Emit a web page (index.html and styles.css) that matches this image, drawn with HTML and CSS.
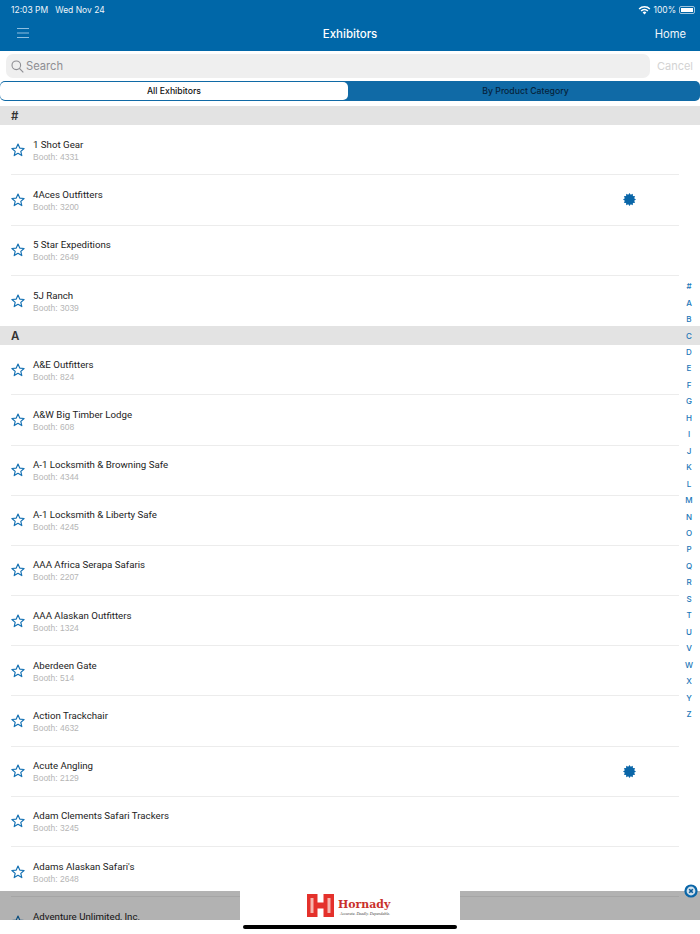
FILE: index.html
```html
<!DOCTYPE html>
<html lang="en">
<head>
<meta charset="utf-8">
<title>Exhibitors</title>
<link rel="stylesheet" href="styles.css">
</head>
<body>
<svg class="defs" width="0" height="0">
  <defs>
    <symbol id="star" viewBox="0 0 14 14"><path d="M7 1.1 8.75 5.1 13.1 5.5 9.8 8.35 10.8 12.6 7 10.35 3.2 12.6 4.2 8.35 .9 5.5 5.25 5.1Z" fill="none" stroke="#1270b3" stroke-width="1.15" stroke-linejoin="round"/></symbol>
    <symbol id="seal" viewBox="0 0 14 14"><path d="M7 0 8.35 1.98 10.5.94 10.68 3.32 13.06 3.5 12.02 5.65 14 7 12.02 8.35 13.06 10.5 10.68 10.68 10.5 13.06 8.35 12.02 7 14 5.65 12.02 3.5 13.06 3.32 10.68.94 10.5 1.98 8.35 0 7 1.98 5.65.94 3.5 3.32 3.32 3.5.94 5.65 1.98Z" fill="#0a66a8"/></symbol>
  </defs>
</svg>
<div class="app">
  <header class="topbar">
    <div class="status">
      <div class="status-left"><span>12:03 PM</span><span>Wed Nov 24</span></div>
      <div class="status-right">
        <svg class="wifi" width="13" height="10" viewBox="0 0 13 10"><path d="M.6 3.4A8.4 8.4 0 0 1 12.4 3.4L11.3 4.5A6.8 6.8 0 0 0 1.7 4.5Z M2.6 5.4A5.6 5.6 0 0 1 10.4 5.4L9.3 6.5A4 4 0 0 0 3.7 6.5Z M4.6 7.4A2.8 2.8 0 0 1 8.4 7.4L6.5 9.4Z" fill="#fff"/></svg>
        <span>100%</span>
        <span class="battery"><span class="battery-fill"></span></span>
      </div>
    </div>
    <nav class="navbar">
      <svg class="menu" width="12" height="12" viewBox="0 0 12 12"><path d="M0 1.5H12M0 6H12M0 10.5H12" stroke="#8fbfe0" stroke-width="1"/></svg>
      <h1 class="title">Exhibitors</h1>
      <span class="home">Home</span>
    </nav>
  </header>
  <div class="searchrow">
    <div class="searchbox">
      <svg width="13" height="13" viewBox="0 0 13 13"><circle cx="5.3" cy="5.3" r="4.3" fill="none" stroke="#8e8e93" stroke-width="1.1"/><path d="M8.4 8.4 12.3 12.3" stroke="#8e8e93" stroke-width="1.2"/></svg>
      <span>Search</span>
    </div>
    <span class="cancel">Cancel</span>
  </div>
  <div class="segments">
    <div class="segment active">All Exhibitors</div>
    <div class="segment">By Product Category</div>
  </div>
  <main class="list">
    <div class="section">#</div>
    <div class="row"><svg class="star"><use href="#star"/></svg><div class="info"><div class="name">1 Shot Gear</div><div class="booth">Booth: 4331</div></div></div>
    <div class="row"><svg class="star"><use href="#star"/></svg><div class="info"><div class="name">4Aces Outfitters</div><div class="booth">Booth: 3200</div></div><svg class="seal"><use href="#seal"/></svg></div>
    <div class="row"><svg class="star"><use href="#star"/></svg><div class="info"><div class="name">5 Star Expeditions</div><div class="booth">Booth: 2649</div></div></div>
    <div class="row last"><svg class="star"><use href="#star"/></svg><div class="info"><div class="name">5J Ranch</div><div class="booth">Booth: 3039</div></div></div>
    <div class="section">A</div>
    <div class="row"><svg class="star"><use href="#star"/></svg><div class="info"><div class="name">A&amp;E Outfitters</div><div class="booth">Booth: 824</div></div></div>
    <div class="row"><svg class="star"><use href="#star"/></svg><div class="info"><div class="name">A&amp;W Big Timber Lodge</div><div class="booth">Booth: 608</div></div></div>
    <div class="row"><svg class="star"><use href="#star"/></svg><div class="info"><div class="name">A-1 Locksmith &amp; Browning Safe</div><div class="booth">Booth: 4344</div></div></div>
    <div class="row"><svg class="star"><use href="#star"/></svg><div class="info"><div class="name">A-1 Locksmith &amp; Liberty Safe</div><div class="booth">Booth: 4245</div></div></div>
    <div class="row"><svg class="star"><use href="#star"/></svg><div class="info"><div class="name">AAA Africa Serapa Safaris</div><div class="booth">Booth: 2207</div></div></div>
    <div class="row"><svg class="star"><use href="#star"/></svg><div class="info"><div class="name">AAA Alaskan Outfitters</div><div class="booth">Booth: 1324</div></div></div>
    <div class="row"><svg class="star"><use href="#star"/></svg><div class="info"><div class="name">Aberdeen Gate</div><div class="booth">Booth: 514</div></div></div>
    <div class="row"><svg class="star"><use href="#star"/></svg><div class="info"><div class="name">Action Trackchair</div><div class="booth">Booth: 4632</div></div></div>
    <div class="row"><svg class="star"><use href="#star"/></svg><div class="info"><div class="name">Acute Angling</div><div class="booth">Booth: 2129</div></div><svg class="seal"><use href="#seal"/></svg></div>
    <div class="row"><svg class="star"><use href="#star"/></svg><div class="info"><div class="name">Adam Clements Safari Trackers</div><div class="booth">Booth: 3245</div></div></div>
    <div class="row"><svg class="star"><use href="#star"/></svg><div class="info"><div class="name">Adams Alaskan Safari's</div><div class="booth">Booth: 2648</div></div></div>
    <div class="row"><svg class="star"><use href="#star"/></svg><div class="info"><div class="name">Adventure Unlimited, Inc.</div><div class="booth">&nbsp;</div></div></div>
  </main>
  <div class="index">
    <span>#</span><span>A</span><span>B</span><span>C</span><span>D</span><span>E</span><span>F</span><span>G</span><span>H</span><span>I</span><span>J</span><span>K</span><span>L</span><span>M</span><span>N</span><span>O</span><span>P</span><span>Q</span><span>R</span><span>S</span><span>T</span><span>U</span><span>V</span><span>W</span><span>X</span><span>Y</span><span>Z</span>
  </div>
  <div class="ad">
    <div class="ad-side"></div>
    <div class="ad-banner">
      <svg class="h-logo" width="27" height="23" viewBox="0 0 27 23"><rect width="27" height="23" fill="#e4312b"/><path d="M5 4V19M22 4V19" stroke="#f6b5ae" stroke-width="3"/><path d="M10.5 0H16.5V8.5H10.5ZM10.5 14.5H16.5V23H10.5Z" fill="#fff"/></svg>
      <div class="ad-text"><div class="brand">Hornady</div><div class="tagline">Accurate. Deadly. Dependable.</div></div>
    </div>
    <div class="ad-side"></div>
  </div>
  <svg class="close" width="14" height="14" viewBox="0 0 14 14"><circle cx="7" cy="7" r="6.6" fill="#0a66a8"/><circle cx="7" cy="7" r="4.4" fill="#cfe0ec"/><path d="M5.2 5.2 8.8 8.8M8.8 5.2 5.2 8.8" stroke="#0a5a96" stroke-width="1.6"/></svg>
  <div class="home-indicator"></div>
</div>
</body>
</html>
```
FILE: styles.css
```css
* { box-sizing: border-box; }
html, body { margin: 0; height: 100%; overflow: hidden; background: #fff; }
body { font-family: Inter, "Liberation Sans", sans-serif; color: #111; }
.defs { position: absolute; }
.app { position: relative; width: 700px; height: 934px; padding-bottom: 14px; overflow: hidden; display: flex; flex-direction: column; }
.topbar { height: 51px; background: #0067a8; color: #fff; flex: none; }
.status { height: 17px; padding: 3px 1px 0 11px; display: flex; justify-content: space-between; align-items: center; font-size: 8.5px; color: #eef5fa; }
.status-left { display: flex; gap: 7px; }
.status-right { display: flex; align-items: center; gap: 2px; padding-right: 4px; }
.battery { width: 16px; height: 8px; padding: 1px; border-radius: 2px; border: 1px solid #9fc5df; display: flex; margin-left: 1px; }
.battery-fill { flex: 1; background: #fff; }
.navbar { height: 34px; padding: 0 14px 0 17px; display: flex; align-items: center; justify-content: space-between; position: relative; }
.menu { margin-bottom: 2px; }
.title { position: absolute; left: 0; right: 0; margin: 0; text-align: center; font-size: 11.5px; font-weight: 500; padding-bottom: 1px; }
.home { font-size: 11.2px; color: #eef5fa; }
.searchrow { height: 30px; padding: 3px 7px 3px 6px; display: flex; align-items: center; justify-content: space-between; flex: none; }
.searchbox { width: 644px; height: 24px; border-radius: 7px; background: #efefef; display: flex; align-items: center; gap: 2px; padding-left: 5px; color: #8e8e93; font-size: 11.2px; }
.cancel { color: #d3d3d3; font-size: 11px; }
.segments { height: 20px; display: flex; background: #106aa6; border-radius: 5px; flex: none; font-size: 8.7px; }
.segment { flex: 1; display: flex; align-items: center; justify-content: center; color: #06233c; font-weight: 500; padding-bottom: 1px; }
.segment.active { background: #fff; color: #111; border-radius: 5px; margin: 1px 1px 1px 0; flex: 0 0 348px; padding-bottom: 0; }
.segment:not(.active) { padding-left: 2px; }
.list { margin-top: 5px; flex: 1; overflow: hidden; }
.section { height: 19.2px; background: #e3e3e3; padding-left: 11px; display: flex; align-items: center; font-size: 11.5px; font-weight: 600; color: #333; }
.row { height: 50.2px; margin-left: 11px; margin-right: 21px; border-bottom: 1px solid #ececec; display: flex; align-items: center; position: relative; }
.row.last { border-bottom: 0; }
.star { width: 14px; height: 14px; flex: none; }
.info { margin-left: 8px; flex: 1; padding-top: 2px; font-family: "Liberation Sans", Arial, sans-serif; }
.name { font-family: Roboto, "Liberation Sans", sans-serif; font-size: 9.7px; line-height: 13px; color: #1c1c1c; }
.booth { font-size: 8.5px; line-height: 13px; color: #b5b5b5; }
.seal { width: 13px; height: 13px; flex: none; margin-right: 43.5px; }
.index { position: absolute; right: 5px; top: 278px; width: 12px; display: flex; flex-direction: column; align-items: center; font-size: 8px; font-weight: 500; color: #1a76b8; }
.index span { height: 16.46px; display: flex; align-items: center; }
.ad { position: absolute; left: 0; right: 0; top: 891px; height: 43px; display: flex; }
.ad-side { flex: 1; height: 29px; background: rgba(0, 0, 0, .3); }
.ad-banner { width: 220px; background: #fff; display: flex; justify-content: center; align-items: flex-start; padding: 3px 1px 0 0; gap: 4px; }
.h-logo { flex: none; }
.ad-text { padding-top: 5px; width: 54px; }
.brand { font-family: "DejaVu Serif", serif; font-weight: 700; font-size: 10.9px; line-height: 12px; color: #c9302a; white-space: nowrap; }
.tagline { font-family: "Liberation Serif", serif; font-style: italic; font-size: 4px; line-height: 6px; color: #444; white-space: nowrap; padding-left: 2px; }
.close { position: absolute; left: 683.5px; top: 883.5px; }
.home-indicator { position: absolute; left: 243px; top: 925px; width: 214px; height: 4px; border-radius: 2px; background: #000; }
```
